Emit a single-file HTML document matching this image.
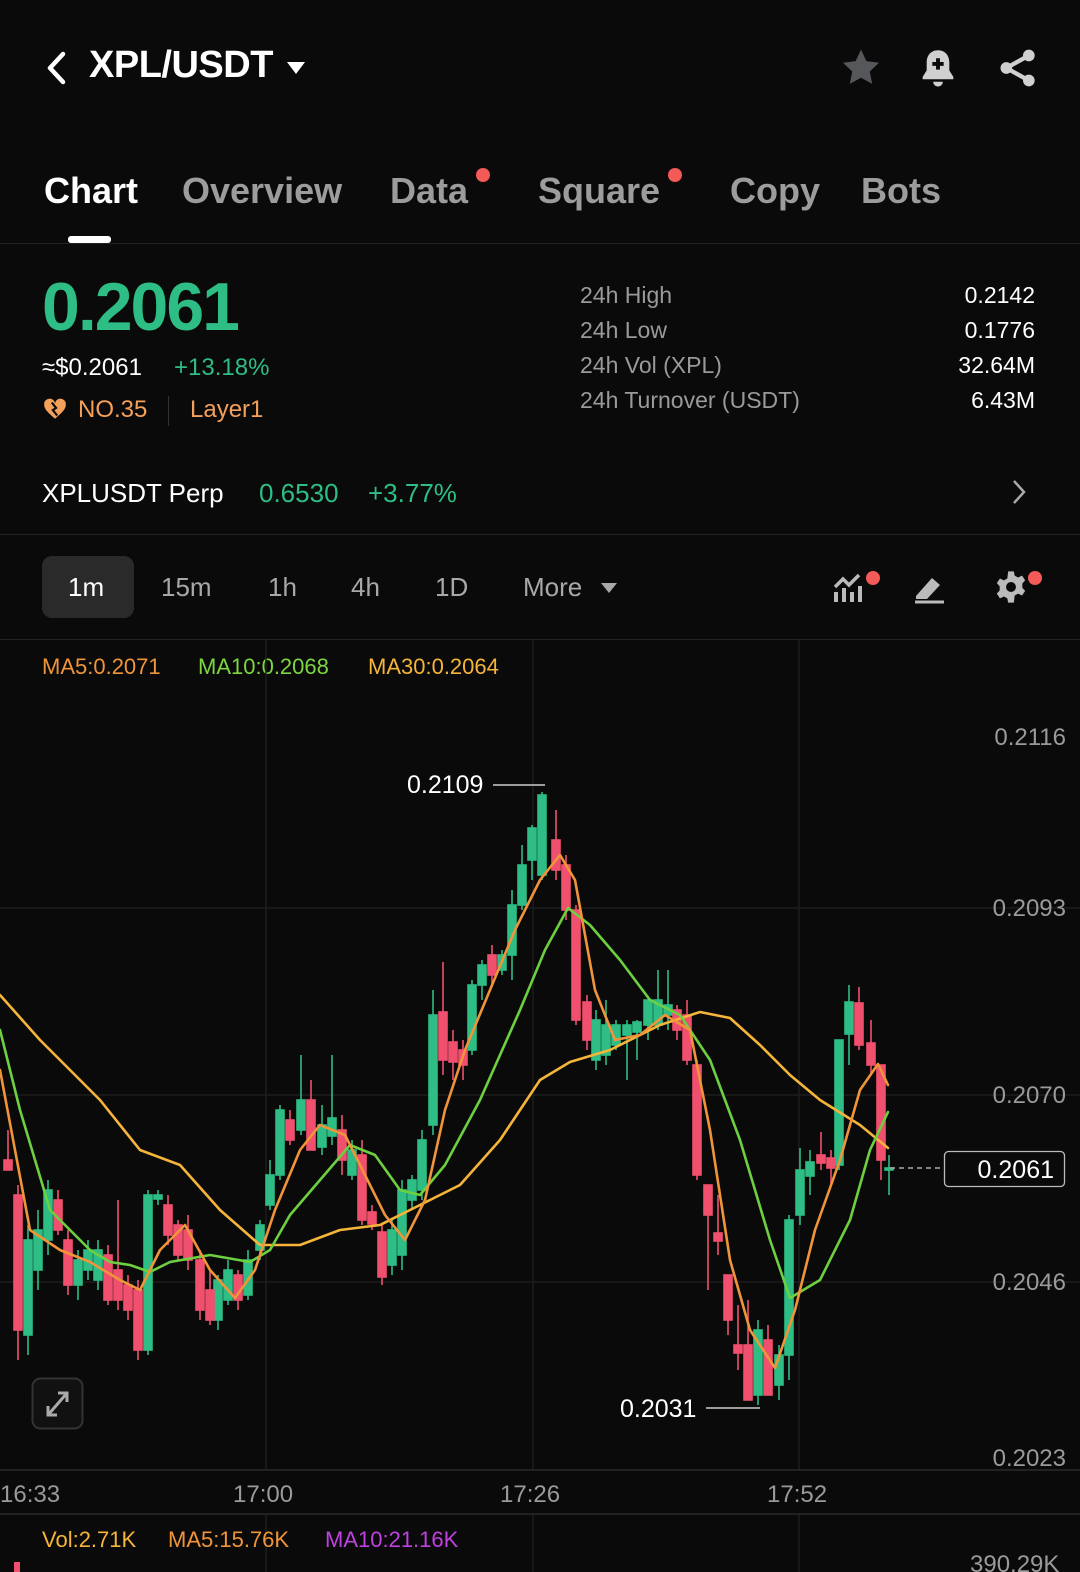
<!DOCTYPE html>
<html><head><meta charset="utf-8"><style>
*{margin:0;padding:0;box-sizing:border-box}
body{width:1080px;height:1572px;background:#0a0a0a;font-family:"Liberation Sans",sans-serif;color:#fff;position:relative;overflow:hidden}
.a{position:absolute;white-space:nowrap}
.g{color:#2ebd85}
.gr{color:#9a9a9a}
</style></head><body>
<!-- header -->
<svg class="a" style="left:44px;top:50px" width="24" height="36" viewBox="0 0 24 36"><path d="M19 4 L6 18 L19 32" stroke="#fff" stroke-width="4.5" fill="none" stroke-linecap="round" stroke-linejoin="round"/></svg>
<div class="a" style="left:89px;top:44px;font-size:38px;font-weight:bold;letter-spacing:-0.5px">XPL/USDT</div>
<svg class="a" style="left:285px;top:60px" width="22" height="16"><path d="M2 2 H20 L11 14Z" fill="#fff"/></svg>
<svg class="a" style="left:840px;top:47px" width="42" height="42" viewBox="0 0 24 24"><path d="M12 1.5l3.1 6.6 7.2.9-5.3 5 1.4 7.1L12 17.6l-6.4 3.5 1.4-7.1-5.3-5 7.2-.9z" fill="#55575b"/></svg>
<svg class="a" style="left:918px;top:47px" width="40" height="42" viewBox="0 0 24 26"><path d="M12 2c-4.5 0-7 3.4-7 7.5v5L2.5 18.5V20h19v-1.5L19 14.5v-5C19 5.4 16.5 2 12 2z" fill="#d0d0d0"/><path d="M9 21.5h6a3 3 0 0 1-6 0z" fill="#d0d0d0"/><path d="M12 7v7M8.5 10.5h7" stroke="#0a0a0a" stroke-width="2.4"/></svg>
<svg class="a" style="left:998px;top:48px" width="40" height="40" viewBox="0 0 24 24"><circle cx="18.5" cy="4.5" r="3.5" fill="#d0d0d0"/><circle cx="5" cy="12" r="3.5" fill="#d0d0d0"/><circle cx="18.5" cy="19.5" r="3.5" fill="#d0d0d0"/><path d="M18.5 4.5L5 12l13.5 7.5" stroke="#d0d0d0" stroke-width="2.6" fill="none"/></svg>
<!-- tabs -->
<div class="a" style="left:44px;top:170px;font-size:36px;font-weight:bold">Chart</div>
<div class="a" style="left:68px;top:236px;width:43px;height:7px;border-radius:3px;background:#fff"></div>
<div class="a gr" style="left:182px;top:170px;font-size:36px;font-weight:bold;color:#9c9c9c">Overview</div>
<div class="a" style="left:390px;top:170px;font-size:36px;font-weight:bold;color:#9c9c9c">Data</div>
<div class="a" style="left:476px;top:168px;width:14px;height:14px;border-radius:7px;background:#f45a57"></div>
<div class="a" style="left:538px;top:170px;font-size:36px;font-weight:bold;color:#9c9c9c">Square</div>
<div class="a" style="left:668px;top:168px;width:14px;height:14px;border-radius:7px;background:#f45a57"></div>
<div class="a" style="left:730px;top:170px;font-size:36px;font-weight:bold;color:#9c9c9c">Copy</div>
<div class="a" style="left:861px;top:170px;font-size:36px;font-weight:bold;color:#9c9c9c">Bots</div>
<div class="a" style="left:0;top:243px;width:1080px;height:1px;background:#232323"></div>
<!-- price -->
<div class="a g" style="left:42px;top:268px;font-size:68px;font-weight:bold;letter-spacing:-2px">0.2061</div>
<div class="a" style="left:42px;top:354px;font-size:24px">≈$0.2061</div>
<div class="a g" style="left:174px;top:354px;font-size:24px">+13.18%</div>
<svg class="a" style="left:42px;top:396px" width="26" height="26" viewBox="0 0 24 24"><path d="M12 21 C5 15 2 12 2 8 a5 5 0 0 1 10-1 a5 5 0 0 1 10 1 c0 4-3 7-10 13z" fill="#f5a05a"/><path d="M9 6 L13 11 L10 13 L14 18" stroke="#0a0a0a" stroke-width="2" fill="none"/></svg>
<div class="a" style="left:78px;top:396px;font-size:24px;color:#f5a05a">NO.35</div>
<div class="a" style="left:168px;top:396px;width:1px;height:30px;background:#333"></div>
<div class="a" style="left:190px;top:396px;font-size:24px;color:#f5a05a">Layer1</div>
<div class="a gr" style="left:580px;top:282px;font-size:23px">24h High</div>
<div class="a gr" style="left:580px;top:317px;font-size:23px">24h Low</div>
<div class="a gr" style="left:580px;top:352px;font-size:23px">24h Vol (XPL)</div>
<div class="a gr" style="left:580px;top:387px;font-size:23px">24h Turnover (USDT)</div>
<div class="a" style="right:45px;top:282px;font-size:23px;text-align:right">0.2142</div>
<div class="a" style="right:45px;top:317px;font-size:23px">0.1776</div>
<div class="a" style="right:45px;top:352px;font-size:23px">32.64M</div>
<div class="a" style="right:45px;top:387px;font-size:23px">6.43M</div>
<!-- perp -->
<div class="a" style="left:42px;top:478px;font-size:26px">XPLUSDT Perp</div>
<div class="a g" style="left:259px;top:478px;font-size:26px">0.6530</div>
<div class="a g" style="left:368px;top:478px;font-size:26px">+3.77%</div>
<svg class="a" style="left:1010px;top:478px" width="18" height="28"><path d="M4 3 L14 14 L4 25" stroke="#aaa" stroke-width="2.5" fill="none"/></svg>
<div class="a" style="left:0;top:534px;width:1080px;height:1px;background:#232323"></div>
<!-- intervals -->
<div class="a" style="left:42px;top:556px;width:92px;height:62px;border-radius:10px;background:#2a2a2a"></div>
<div class="a" style="left:68px;top:572px;font-size:26px">1m</div>
<div class="a gr" style="left:161px;top:572px;font-size:26px;color:#a8a8a8">15m</div>
<div class="a gr" style="left:268px;top:572px;font-size:26px;color:#a8a8a8">1h</div>
<div class="a gr" style="left:351px;top:572px;font-size:26px;color:#a8a8a8">4h</div>
<div class="a gr" style="left:435px;top:572px;font-size:26px;color:#a8a8a8">1D</div>
<div class="a gr" style="left:523px;top:572px;font-size:26px;color:#a8a8a8">More</div>
<svg class="a" style="left:600px;top:582px" width="18" height="12"><path d="M1 1H17L9 11Z" fill="#a8a8a8"/></svg>
<svg class="a" style="left:832px;top:572px" width="34" height="32" viewBox="0 0 34 32"><path d="M3 15 L11 7 L17 13 L27 3" stroke="#bbb" stroke-width="3.5" fill="none"/><path d="M4 20v10M12 16v14M20 20v10M28 14v16" stroke="#bbb" stroke-width="4"/></svg>
<div class="a" style="left:866px;top:571px;width:14px;height:14px;border-radius:7px;background:#f45a57"></div>
<svg class="a" style="left:912px;top:572px" width="34" height="32" viewBox="0 0 34 32"><path d="M4 24 L20 6 L28 13 L15 27 H4Z" fill="#bbb"/><path d="M3 30H32" stroke="#bbb" stroke-width="3"/></svg>
<svg class="a" style="left:994px;top:570px" width="34" height="34" viewBox="0 0 24 24"><path d="M10 1h4l.6 3 2.4 1.3 2.8-1.3 2.2 3.3-2 2.2v3l2 2.2-2.2 3.3-2.8-1.3-2.4 1.3L14 23h-4l-.6-3-2.4-1.3-2.8 1.3L2 16.7l2-2.2v-3l-2-2.2L4.2 6 7 7.3 9.4 6z" fill="#bbb"/><circle cx="12" cy="12" r="3.5" fill="#0a0a0a"/></svg>
<div class="a" style="left:1028px;top:571px;width:14px;height:14px;border-radius:7px;background:#f45a57"></div>
<div class="a" style="left:0;top:639px;width:1080px;height:1px;background:#232323"></div>
<!-- MA legend -->
<div class="a" style="left:42px;top:654px;font-size:22px;color:#f0943a">MA5:0.2071</div>
<div class="a" style="left:198px;top:654px;font-size:22px;color:#7bd63f">MA10:0.2068</div>
<div class="a" style="left:368px;top:654px;font-size:22px;color:#f5b43a">MA30:0.2064</div>
<!-- chart -->
<svg class="a" style="left:0;top:0" width="1080" height="1572">
<g stroke="#1c1c1c" stroke-width="1.5">
<line x1="266" y1="640" x2="266" y2="1470"/><line x1="533" y1="640" x2="533" y2="1470"/><line x1="799" y1="640" x2="799" y2="1470"/>
<line x1="0" y1="908" x2="1080" y2="908"/><line x1="0" y1="1095" x2="1080" y2="1095"/><line x1="0" y1="1282" x2="1080" y2="1282"/>
<line x1="266" y1="1515" x2="266" y2="1572"/><line x1="533" y1="1515" x2="533" y2="1572"/><line x1="799" y1="1515" x2="799" y2="1572"/>
</g>
<line x1="0" y1="1470" x2="1080" y2="1470" stroke="#2a2a2a" stroke-width="1.5"/>
<line x1="0" y1="1514" x2="1080" y2="1514" stroke="#2a2a2a" stroke-width="1.5"/>
<g font-size="24" fill="#9a9a9a" font-family="Liberation Sans,sans-serif" text-anchor="end">
<text x="1066" y="745">0.2116</text><text x="1066" y="916">0.2093</text><text x="1066" y="1103">0.2070</text><text x="1066" y="1290">0.2046</text><text x="1066" y="1466">0.2023</text>
</g>
<g font-size="24" fill="#9a9a9a" font-family="Liberation Sans,sans-serif">
<text x="0" y="1502">16:33</text><text x="233" y="1502">17:00</text><text x="500" y="1502">17:26</text><text x="767" y="1502">17:52</text>
<text x="970" y="1572">390.29K</text>
</g>
<g id="c"></g>
<g stroke-width="1.6">
<!-- green candles -->
<g stroke="#2ebd85" fill="#2ebd85">
<line x1="28" y1="1225" x2="28" y2="1355"/><rect x="24" y="1240" width="8" height="95"/>
<line x1="38" y1="1210" x2="38" y2="1290"/><rect x="34" y="1230" width="8" height="40"/>
<line x1="48" y1="1180" x2="48" y2="1255"/><rect x="44" y="1190" width="8" height="50"/>
<line x1="78" y1="1250" x2="78" y2="1300"/><rect x="74" y="1260" width="8" height="25"/>
<line x1="88" y1="1240" x2="88" y2="1280"/><rect x="84" y="1250" width="8" height="20"/>
<line x1="98" y1="1240" x2="98" y2="1290"/><rect x="94" y="1250" width="8" height="30"/>
<line x1="148" y1="1190" x2="148" y2="1355"/><rect x="144" y="1195" width="8" height="155"/>
<line x1="158" y1="1190" x2="158" y2="1205"/><rect x="154" y="1195" width="8" height="4"/>
<line x1="218" y1="1275" x2="218" y2="1330"/><rect x="214" y="1280" width="8" height="40"/>
<line x1="228" y1="1260" x2="228" y2="1305"/><rect x="224" y="1270" width="8" height="30"/>
<line x1="248" y1="1250" x2="248" y2="1300"/><rect x="244" y="1260" width="8" height="35"/>
<line x1="260" y1="1220" x2="260" y2="1260"/><rect x="256" y="1225" width="8" height="25"/>
<line x1="270" y1="1160" x2="270" y2="1210"/><rect x="266" y="1175" width="8" height="30"/>
<line x1="280" y1="1105" x2="280" y2="1180"/><rect x="276" y="1110" width="8" height="65"/>
<line x1="301" y1="1055" x2="301" y2="1135"/><rect x="297" y="1100" width="8" height="30"/>
<line x1="322" y1="1105" x2="322" y2="1155"/><rect x="318" y="1125" width="8" height="22"/>
<line x1="332" y1="1055" x2="332" y2="1145"/><rect x="328" y="1118" width="8" height="18"/>
<line x1="352" y1="1140" x2="352" y2="1180"/><rect x="348" y="1150" width="8" height="25"/>
<line x1="392" y1="1220" x2="392" y2="1275"/><rect x="388" y="1230" width="8" height="35"/>
<line x1="402" y1="1180" x2="402" y2="1270"/><rect x="398" y="1190" width="8" height="65"/>
<line x1="412" y1="1175" x2="412" y2="1210"/><rect x="408" y="1180" width="8" height="20"/>
<line x1="422" y1="1130" x2="422" y2="1200"/><rect x="418" y="1140" width="8" height="50"/>
<line x1="433" y1="990" x2="433" y2="1135"/><rect x="429" y="1015" width="8" height="110"/>
<line x1="472" y1="980" x2="472" y2="1055"/><rect x="468" y="985" width="8" height="65"/>
<line x1="482" y1="960" x2="482" y2="1000"/><rect x="478" y="965" width="8" height="20"/>
<line x1="502" y1="950" x2="502" y2="975"/><rect x="498" y="955" width="8" height="15"/>
<line x1="512" y1="890" x2="512" y2="980"/><rect x="508" y="905" width="8" height="50"/>
<line x1="522" y1="845" x2="522" y2="910"/><rect x="518" y="865" width="8" height="40"/>
<line x1="532" y1="825" x2="532" y2="880"/><rect x="528" y="828" width="8" height="32"/>
<line x1="542" y1="792" x2="542" y2="880"/><rect x="538" y="795" width="8" height="80"/>
<line x1="596" y1="1010" x2="596" y2="1070"/><rect x="592" y="1020" width="8" height="40"/>
<line x1="606" y1="1000" x2="606" y2="1065"/><rect x="602" y="1025" width="8" height="30"/>
<line x1="616" y1="1020" x2="616" y2="1050"/><rect x="612" y="1025" width="8" height="20"/>
<line x1="627" y1="1020" x2="627" y2="1080"/><rect x="623" y="1025" width="8" height="10"/>
<line x1="637" y1="1020" x2="637" y2="1060"/><rect x="633" y="1022" width="8" height="10"/>
<line x1="648" y1="1010" x2="648" y2="1040"/><rect x="644" y="1000" width="8" height="25"/>
<line x1="658" y1="970" x2="658" y2="1030"/><rect x="654" y="1000" width="8" height="25"/>
<line x1="668" y1="970" x2="668" y2="1030"/><rect x="664" y="1005" width="8" height="10"/>
<line x1="758" y1="1320" x2="758" y2="1405"/><rect x="754" y="1330" width="8" height="65"/>
<line x1="779" y1="1345" x2="779" y2="1400"/><rect x="775" y="1355" width="8" height="30"/>
<line x1="789" y1="1215" x2="789" y2="1380"/><rect x="785" y="1220" width="8" height="135"/>
<line x1="800" y1="1148" x2="800" y2="1225"/><rect x="796" y="1170" width="8" height="45"/>
<line x1="810" y1="1150" x2="810" y2="1195"/><rect x="806" y="1162" width="8" height="14"/>
<line x1="839" y1="1040" x2="839" y2="1170"/><rect x="835" y="1040" width="8" height="125"/>
<line x1="849" y1="985" x2="849" y2="1065"/><rect x="845" y="1002" width="8" height="32"/>
<line x1="889" y1="1155" x2="889" y2="1195"/><rect x="885" y="1168" width="8" height="2"/>
</g>
<!-- red candles -->
<g stroke="#f0506e" fill="#f0506e">
<line x1="8" y1="1130" x2="8" y2="1170"/><rect x="4" y="1160" width="8" height="10"/>
<line x1="18" y1="1185" x2="18" y2="1360"/><rect x="14" y="1195" width="8" height="135"/>
<line x1="58" y1="1190" x2="58" y2="1235"/><rect x="54" y="1200" width="8" height="30"/>
<line x1="68" y1="1230" x2="68" y2="1295"/><rect x="64" y="1240" width="8" height="45"/>
<line x1="108" y1="1245" x2="108" y2="1305"/><rect x="104" y="1255" width="8" height="45"/>
<line x1="118" y1="1200" x2="118" y2="1310"/><rect x="114" y="1270" width="8" height="30"/>
<line x1="128" y1="1275" x2="128" y2="1320"/><rect x="124" y="1285" width="8" height="25"/>
<line x1="138" y1="1280" x2="138" y2="1360"/><rect x="134" y="1290" width="8" height="60"/>
<line x1="168" y1="1195" x2="168" y2="1245"/><rect x="164" y="1205" width="8" height="30"/>
<line x1="178" y1="1220" x2="178" y2="1260"/><rect x="174" y="1225" width="8" height="30"/>
<line x1="188" y1="1215" x2="188" y2="1270"/><rect x="184" y="1230" width="8" height="30"/>
<line x1="200" y1="1250" x2="200" y2="1320"/><rect x="196" y="1260" width="8" height="50"/>
<line x1="210" y1="1270" x2="210" y2="1325"/><rect x="206" y="1290" width="8" height="30"/>
<line x1="238" y1="1270" x2="238" y2="1310"/><rect x="234" y="1275" width="8" height="25"/>
<line x1="290" y1="1110" x2="290" y2="1145"/><rect x="286" y="1120" width="8" height="20"/>
<line x1="311" y1="1080" x2="311" y2="1150"/><rect x="307" y="1100" width="8" height="50"/>
<line x1="342" y1="1115" x2="342" y2="1175"/><rect x="338" y="1130" width="8" height="30"/>
<line x1="362" y1="1140" x2="362" y2="1225"/><rect x="358" y="1155" width="8" height="65"/>
<line x1="372" y1="1205" x2="372" y2="1230"/><rect x="368" y="1212" width="8" height="12"/>
<line x1="382" y1="1225" x2="382" y2="1285"/><rect x="378" y="1232" width="8" height="45"/>
<line x1="443" y1="962" x2="443" y2="1075"/><rect x="439" y="1012" width="8" height="48"/>
<line x1="453" y1="1030" x2="453" y2="1080"/><rect x="449" y="1042" width="8" height="20"/>
<line x1="463" y1="1040" x2="463" y2="1080"/><rect x="459" y="1050" width="8" height="15"/>
<line x1="492" y1="945" x2="492" y2="985"/><rect x="488" y="955" width="8" height="20"/>
<line x1="556" y1="810" x2="556" y2="880"/><rect x="552" y="840" width="8" height="30"/>
<line x1="566" y1="855" x2="566" y2="920"/><rect x="562" y="865" width="8" height="45"/>
<line x1="576" y1="905" x2="576" y2="1025"/><rect x="572" y="910" width="8" height="110"/>
<line x1="587" y1="995" x2="587" y2="1050"/><rect x="583" y="1002" width="8" height="38"/>
<line x1="677" y1="1005" x2="677" y2="1040"/><rect x="673" y="1010" width="8" height="20"/>
<line x1="687" y1="1000" x2="687" y2="1065"/><rect x="683" y="1015" width="8" height="45"/>
<line x1="697" y1="1060" x2="697" y2="1180"/><rect x="693" y="1065" width="8" height="110"/>
<line x1="708" y1="1185" x2="708" y2="1290"/><rect x="704" y="1185" width="8" height="30"/>
<line x1="718" y1="1195" x2="718" y2="1255"/><rect x="714" y="1233" width="8" height="8"/>
<line x1="728" y1="1275" x2="728" y2="1335"/><rect x="724" y="1275" width="8" height="45"/>
<line x1="738" y1="1305" x2="738" y2="1370"/><rect x="734" y="1345" width="8" height="8"/>
<line x1="748" y1="1300" x2="748" y2="1400"/><rect x="744" y="1345" width="8" height="55"/>
<line x1="768" y1="1325" x2="768" y2="1395"/><rect x="764" y="1340" width="8" height="55"/>
<line x1="821" y1="1132" x2="821" y2="1170"/><rect x="817" y="1155" width="8" height="8"/>
<line x1="831" y1="1150" x2="831" y2="1185"/><rect x="827" y="1158" width="8" height="10"/>
<line x1="859" y1="987" x2="859" y2="1050"/><rect x="855" y="1003" width="8" height="42"/>
<line x1="871" y1="1020" x2="871" y2="1075"/><rect x="867" y="1043" width="8" height="22"/>
<line x1="881" y1="1065" x2="881" y2="1180"/><rect x="877" y="1065" width="8" height="95"/>
</g>
</g>
<g fill="none" stroke-width="2.6" stroke-linejoin="round" stroke-linecap="round">
<polyline stroke="#f5b43a" points="0,995 40,1040 70,1070 100,1100 140,1150 180,1165 220,1210 260,1245 300,1245 340,1230 380,1225 420,1205 460,1185 500,1140 540,1080 570,1062 610,1050 660,1025 700,1012 730,1018 760,1045 790,1075 820,1100 860,1125 888,1148"/>
<polyline stroke="#6cd040" points="0,1030 20,1110 50,1210 90,1250 110,1262 130,1265 150,1272 170,1262 210,1255 250,1262 270,1250 290,1215 320,1180 350,1145 375,1155 400,1190 420,1195 445,1165 480,1100 520,1010 545,950 568,908 590,925 620,960 650,1000 680,1015 710,1060 740,1140 770,1240 790,1298 820,1280 850,1220 870,1150 888,1112"/>
<polyline stroke="#f0943a" points="0,1070 15,1150 30,1230 60,1250 90,1262 120,1280 140,1290 160,1250 185,1225 210,1270 235,1298 255,1270 275,1210 300,1150 320,1125 345,1135 365,1175 385,1215 405,1240 425,1200 445,1110 465,1050 490,990 515,930 540,880 560,855 575,880 595,990 615,1040 640,1035 665,1015 690,1030 710,1130 730,1260 750,1330 775,1368 795,1310 815,1230 840,1160 860,1090 878,1064 888,1085"/>
</g>
<line x1="493" y1="785" x2="545" y2="785" stroke="#ccc" stroke-width="1.5"/>
<line x1="706" y1="1408" x2="760" y2="1408" stroke="#ccc" stroke-width="1.5"/>
<text x="407" y="793" font-size="25" fill="#fff" font-family="Liberation Sans,sans-serif">0.2109</text>
<text x="620" y="1417" font-size="25" fill="#fff" font-family="Liberation Sans,sans-serif">0.2031</text>
<line x1="890" y1="1168" x2="944" y2="1168" stroke="#aaa" stroke-width="1.5" stroke-dasharray="5,4"/>
<rect x="944.5" y="1151.5" width="120" height="35" rx="4" fill="#0a0a0a" stroke="#bbb" stroke-width="1.3"/>
<text x="1054" y="1178" font-size="25" fill="#fff" text-anchor="end" font-family="Liberation Sans,sans-serif">0.2061</text>
<rect x="32.5" y="1378.5" width="50" height="50" rx="8" fill="#111" stroke="#333" stroke-width="2"/>
<path d="M48 1415 L67 1393 M58 1393 H67 V1402 M48 1406 V1415 H57" stroke="#aaa" stroke-width="3" fill="none"/>
<rect x="14" y="1562" width="6" height="10" fill="#f0506e"/>
</svg>
<div class="a" style="left:42px;top:1527px;font-size:22px;color:#f5b43a">Vol:2.71K</div>
<div class="a" style="left:168px;top:1527px;font-size:22px;color:#f0943a">MA5:15.76K</div>
<div class="a" style="left:325px;top:1527px;font-size:22px;color:#c040e0">MA10:21.16K</div>
</body></html>
